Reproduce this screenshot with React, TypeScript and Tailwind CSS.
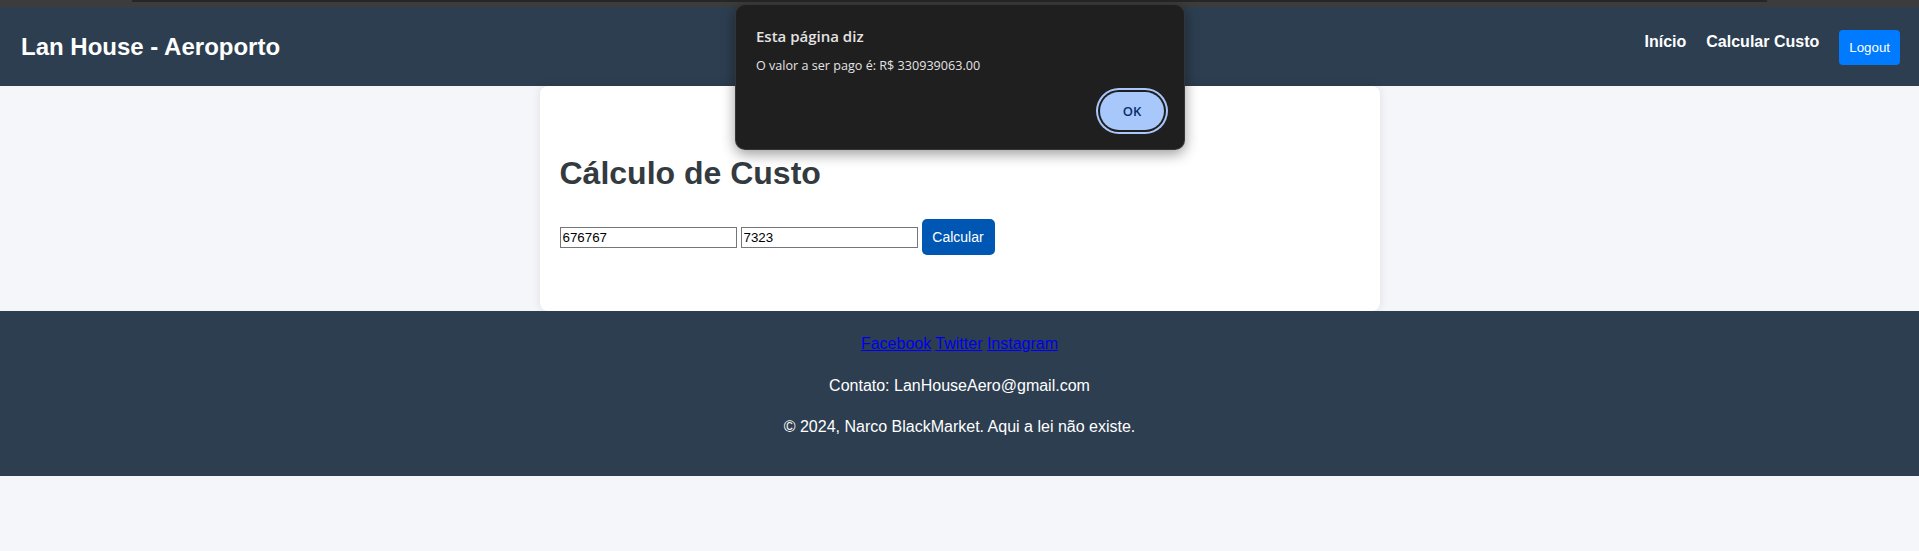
import React, { useState } from 'react';

const App: React.FC = () => {
  const [valorA, setValorA] = useState('676767');
  const [valorB, setValorB] = useState('7323');

  return (
    <div className="min-h-screen bg-[#f4f6f9] font-['Liberation_Sans',Arial,sans-serif] leading-[1.6] relative">
      {/* faixa do navegador */}
      <div className="h-[7px] bg-[#3c3c3c] pl-[132px] pr-[152px]">
        <div className="h-[2px] bg-[#262626]" />
      </div>

      <header className="h-[79px] bg-[#2c3e50] text-white flex items-center justify-between pl-[21px] pr-[19px]">
        <h1 className="text-[24px] font-bold leading-none">Lan House - Aeroporto</h1>
        <nav className="flex items-center">
          <a href="#" className="mr-[20px] mb-[10px] text-[16px] font-bold text-white">Início</a>
          <a href="#" className="mr-[20px] mb-[10px] text-[16px] font-bold text-white">Calcular Custo</a>
          <button className="mt-[2px] bg-[#007bff] text-white text-[13.33px] leading-[15px] px-[10px] py-[10px] rounded-[4px]">
            Logout
          </button>
        </nav>
      </header>

      <main className="w-[840px] mx-auto bg-white rounded-[8px] shadow-[0_0_10px_rgba(0,0,0,0.1)] px-[20px] pt-[62px] pb-[56px]">
        <h2 className="text-[32px] font-bold leading-[51.2px] text-[#333a40]">Cálculo de Custo</h2>
        <div className="mt-[20px] flex items-center gap-[4px]">
          <input
            value={valorA}
            onChange={(e) => setValorA(e.target.value)}
            className="w-[177px] h-[21px] border border-[#767676] px-[2px] text-[13.33px] text-black leading-none outline-none"
          />
          <input
            value={valorB}
            onChange={(e) => setValorB(e.target.value)}
            className="w-[177px] h-[21px] border border-[#767676] px-[2px] text-[13.33px] text-black leading-none outline-none"
          />
          <button className="h-[36px] w-[73px] bg-[#0056b3] text-white text-[14px] leading-[16px] rounded-[5px]">
            Calcular
          </button>
        </div>
      </main>

      <footer className="bg-[#2c3e50] text-white text-center text-[16px] py-[20px]">
        <div>
          <a href="#" className="text-[#0000ee] underline">Facebook</a>{' '}
          <a href="#" className="text-[#0000ee] underline">Twitter</a>{' '}
          <a href="#" className="text-[#0000ee] underline">Instagram</a>
        </div>
        <p className="my-[16px]">Contato: LanHouseAero@gmail.com</p>
        <p className="mb-[16px]">© 2024, Narco BlackMarket. Aqui a lei não existe.</p>
      </footer>

      {/* alerta do navegador */}
      <div className="absolute left-[735px] top-[4px] w-[450px] h-[146px] bg-[#1f1f1f] rounded-[10px] border border-white/10 shadow-[0_4px_14px_rgba(0,0,0,0.4)] pl-[20px] pr-[20px] pt-[21px] font-['Open_Sans','Noto_Sans',sans-serif] flex flex-col">
        <div className="text-[15px] leading-[20px] font-semibold text-[#e3e3e3]">Esta página diz</div>
        <div className="mt-[11px] text-[12.6px] leading-[18px] text-[#e3e3e3]">O valor a ser pago é: R$ 330939063.00</div>
        <div className="mt-[17px] flex justify-end">
          <button className="w-[64px] h-[38px] rounded-full bg-[#a8c7fa] text-[#062e6f] text-[13px] font-semibold shadow-[0_0_0_2px_#1f1f1f,0_0_0_4px_#a8c7fa]">
            OK
          </button>
        </div>
      </div>
    </div>
  );
};

export default App;
